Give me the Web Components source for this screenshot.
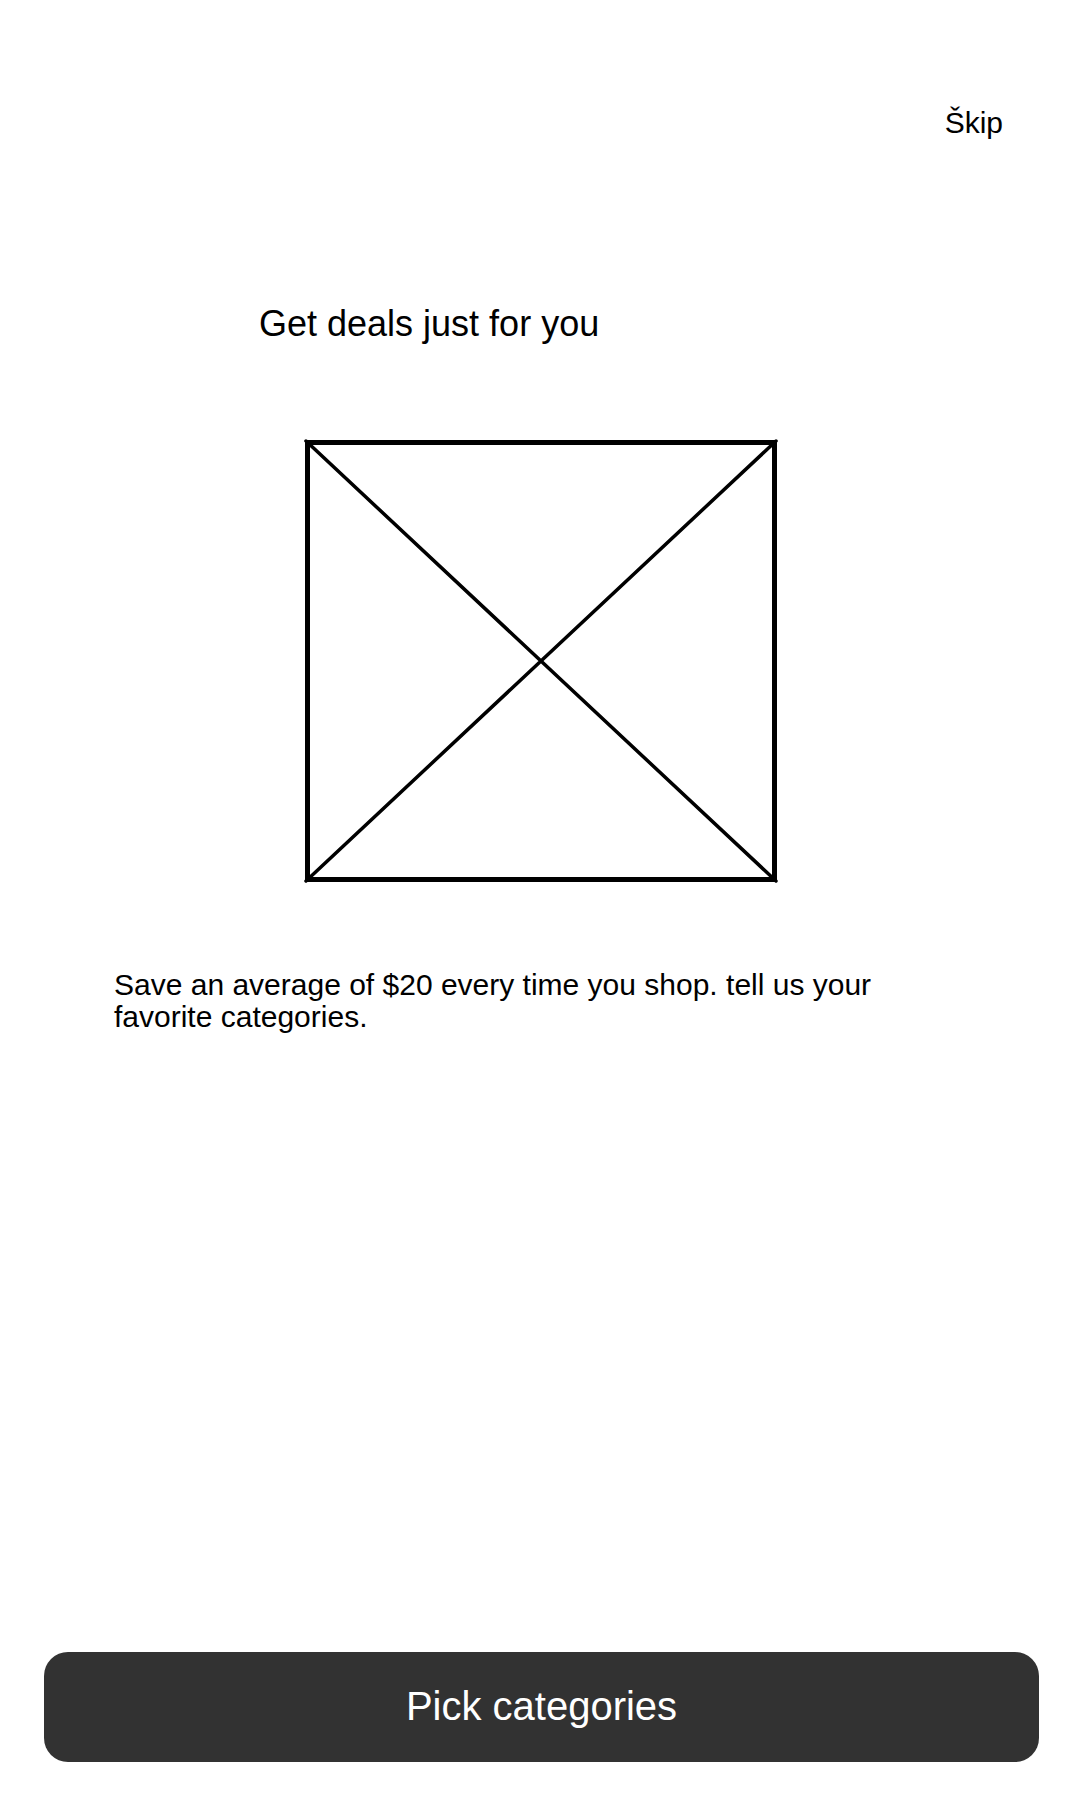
<!DOCTYPE html>
<html lang="en">
<head>
<meta charset="utf-8">
<meta name="viewport" content="width=device-width, initial-scale=1">
<title>Get deals just for you</title>
<style>
  body { margin: 0; background: #fff; color: #000; font-family: "Liberation Sans", Arial, sans-serif; }
</style>
</head>
<body>
<onboarding-screen>
  <skip-link slot="top" href="#home">Škip</skip-link>
  <screen-title slot="title">Get deals just for you</screen-title>
  <image-placeholder slot="picture" label="Deals illustration"></image-placeholder>
  <screen-text slot="text">Save an average of $20 every time you shop. tell us your favorite categories.</screen-text>
  <primary-button slot="action">Pick categories</primary-button>
</onboarding-screen>
<script>
  class Base extends HTMLElement {
    constructor() {
      super();
      this.attachShadow({ mode: 'open' }).innerHTML = this.constructor.markup;
    }
  }

  customElements.define('onboarding-screen', class extends Base {
    static markup = `
      <style>
        :host { display: flex; flex-direction: column; box-sizing: border-box; min-height: 100vh; padding: 107px 41px 38px 44px; }
        header { display: flex; justify-content: flex-end; padding-right: 36px; }
        main { display: flex; flex-direction: column; flex: 1; }
        .title { padding: 165px 0 0 215px; }
        .picture { display: flex; justify-content: center; padding: 96px 2px 0 0; }
        .text { padding: 87px 130px 40px 70px; }
        footer { display: grid; }
      </style>
      <header><slot name="top"></slot></header>
      <main>
        <div class="title"><slot name="title"></slot></div>
        <div class="picture"><slot name="picture"></slot></div>
        <div class="text"><slot name="text"></slot></div>
      </main>
      <footer><slot name="action"></slot></footer>`;
  });

  customElements.define('skip-link', class extends Base {
    static markup = `
      <style>
        :host { display: block; font-size: 30px; line-height: 32px; }
        a { display: block; color: inherit; text-decoration: none; }
      </style>
      <a><slot></slot></a>`;
    connectedCallback() {
      this.shadowRoot.querySelector('a').href = this.getAttribute('href');
    }
  });

  customElements.define('screen-title', class extends Base {
    static markup = `
      <style>
        :host { display: block; }
        h1 { margin: 0; font-size: 36px; font-weight: 400; line-height: 40px; }
      </style>
      <h1><slot></slot></h1>`;
  });

  customElements.define('image-placeholder', class extends Base {
    static markup = `
      <style>
        :host { display: block; width: 100%; max-width: 472px; }
        svg { display: block; width: 100%; height: auto; overflow: visible; }
      </style>
      <svg viewBox="0 0 472 442" role="img" fill="none" stroke="#000">
        <rect x="2.5" y="2.5" width="467" height="437" stroke-width="5"/>
        <path d="M1 1L471 441M471 1L1 441" stroke-width="3.5" stroke-linecap="round"/>
      </svg>`;
    connectedCallback() {
      this.shadowRoot.querySelector('svg').setAttribute('aria-label', this.getAttribute('label'));
    }
  });

  customElements.define('screen-text', class extends Base {
    static markup = `
      <style>
        :host { display: block; }
        p { margin: 0; font-size: 30px; line-height: 32px; }
      </style>
      <p><slot></slot></p>`;
  });

  customElements.define('primary-button', class extends Base {
    static markup = `
      <style>
        :host { display: block; }
        button { display: block; width: 100%; padding: 31px 24px 33px; border: 0; border-radius: 24px; background: #323232; color: #fff; font: 40px/46px "Liberation Sans", Arial, sans-serif; cursor: pointer; }
      </style>
      <button type="button"><slot></slot></button>`;
  });
</script>
</body>
</html>
